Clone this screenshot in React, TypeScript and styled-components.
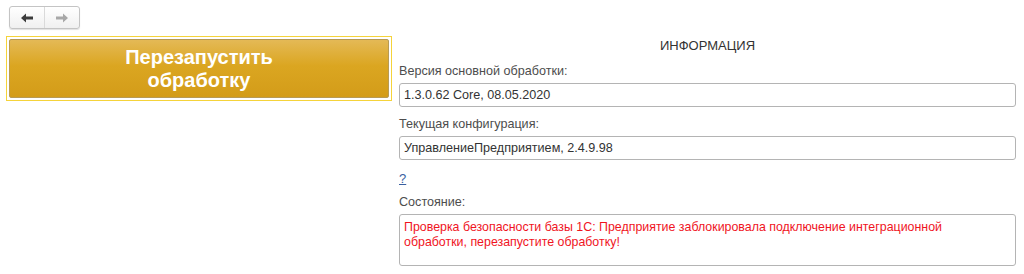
import styled, { createGlobalStyle } from "styled-components";

const GlobalStyle = createGlobalStyle`
  body {
    margin: 0;
    background: #fff;
    font-family: Arial, "Liberation Sans", sans-serif;
  }
`;

const Page = styled.div`
  width: 1024px;
  height: 274px;
  padding: 6px 8px 0 6px;
  box-sizing: border-box;
  display: flex;
  flex-direction: column;
  gap: 7px;
  overflow: hidden;
`;

const NavGroup = styled.div`
  flex: none;
  display: flex;
  margin-left: 3px;
  width: 71px;
  height: 23px;
  box-sizing: border-box;
  border: 1px solid #c4c4c4;
  border-radius: 3px;
  background: linear-gradient(#fff, #f0f0f0);
  box-shadow: 0 1px 1px rgba(0, 0, 0, 0.12);
`;

const NavButton = styled.div<{ $last?: boolean }>`
  flex: 1;
  display: flex;
  align-items: center;
  justify-content: center;
  border-left: ${({ $last }) => ($last ? "1px solid #dadada" : "none")};
`;

const Body = styled.div`
  flex: none;
  display: flex;
  gap: 7px;
`;

const LeftColumn = styled.div`
  width: 386px;
  flex: none;
`;

const FocusFrame = styled.div`
  border: 1px solid #f5d33a;
  padding: 2px;
`;

const BigButton = styled.div`
  height: 59px;
  box-sizing: border-box;
  border: 1px solid #b79a55;
  border-radius: 2px;
  background: linear-gradient(#e4b956 0%, #dba621 45%, #d39c19 100%);
  color: #fff;
  font-weight: bold;
  font-size: 20px;
  line-height: 23px;
  text-align: center;
  display: flex;
  align-items: center;
  justify-content: center;
`;

const RightColumn = styled.div`
  flex: 1;
  display: flex;
  flex-direction: column;
  padding-top: 3px;
`;

const Title = styled.div`
  text-align: center;
  font-size: 13px;
  line-height: 14px;
  color: #333;
  margin-bottom: 11px;
`;

const Label = styled.div`
  font-size: 12.6px;
  line-height: 15px;
  color: #4d4d4d;
  margin-bottom: 4px;
`;

const Field = styled.div<{ $tall?: boolean; $error?: boolean }>`
  box-sizing: border-box;
  height: ${({ $tall }) => ($tall ? "52px" : "24px")};
  border: 1px solid #b4b4b4;
  border-radius: 3px;
  padding: ${({ $tall }) => ($tall ? "5px 4px" : "4px 4px")};
  font-size: ${({ $error }) => ($error ? "12.4px" : "12.6px")};
  line-height: 15px;
  color: ${({ $error }) => ($error ? "#f0141e" : "#333")};
  margin-bottom: 10px;
`;

const HelpLink = styled.a`
  font-size: 13px;
  line-height: 15px;
  color: #3a5fa0;
  text-decoration: underline;
  margin-top: 1px;
  margin-bottom: 9px;
  align-self: flex-start;
`;

function Arrow({ dir, color }: { dir: "left" | "right"; color: string }) {
  return (
    <svg width="14" height="10" viewBox="0 0 14 10">
      <g transform={dir === "right" ? "scale(-1,1) translate(-14,0)" : undefined}>
        <path d="M1 5 L6 0.5 L6 3.6 L13 3.6 L13 6.4 L6 6.4 L6 9.5 Z" fill={color} />
      </g>
    </svg>
  );
}

export default function App() {
  return (
    <>
      <GlobalStyle />
      <Page>
        <NavGroup>
          <NavButton>
            <Arrow dir="left" color="#3c3c3c" />
          </NavButton>
          <NavButton $last>
            <Arrow dir="right" color="#a8a8a8" />
          </NavButton>
        </NavGroup>
        <Body>
          <LeftColumn>
            <FocusFrame>
              <BigButton>
                Перезапустить
                <br />
                обработку
              </BigButton>
            </FocusFrame>
          </LeftColumn>
          <RightColumn>
            <Title>ИНФОРМАЦИЯ</Title>
            <Label>Версия основной обработки:</Label>
            <Field>1.3.0.62 Core, 08.05.2020</Field>
            <Label>Текущая конфигурация:</Label>
            <Field>УправлениеПредприятием, 2.4.9.98</Field>
            <HelpLink href="#">?</HelpLink>
            <Label>Состояние:</Label>
            <Field $tall $error>
              Проверка безопасности базы 1С: Предприятие заблокировала подключение интеграционной
              <br />
              обработки, перезапустите обработку!
            </Field>
          </RightColumn>
        </Body>
      </Page>
    </>
  );
}
